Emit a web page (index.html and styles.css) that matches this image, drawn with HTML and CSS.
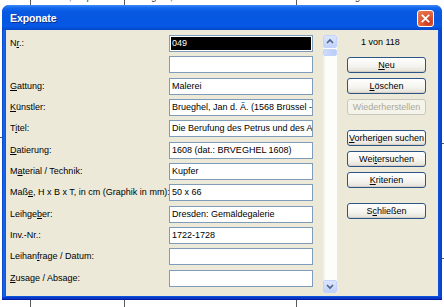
FILE: index.html
```html
<!DOCTYPE html>
<html lang="de">
<head>
<meta charset="utf-8">
<title>Exponate</title>
<link rel="stylesheet" href="styles.css">
</head>
<body>
<div class="desk">
  <div class="bg-vline" style="left:30px"></div>
  <div class="bg-vline" style="left:124px"></div>
  <div class="bg-vline" style="left:296px"></div>
  <div class="bg-hline" style="left:0;top:137px;width:3px"></div>
  <div class="bg-hline" style="left:441px;top:143px;width:3px"></div>
  <div class="bg-hline" style="left:441px;top:258px;width:3px"></div>
  <div class="bg-text" style="left:36px">Malerei, Kupfer</div>
  <div class="bg-text" style="left:130px">Brueghel, Jan d. Ä. 1568 Brüssel</div>
  <div class="bg-text" style="left:302px">Die Berufung des Petrus</div>

  <div class="win">
    <div class="titlebar">
      <span class="title">Exponate</span>
      <span class="close">
        <svg width="17" height="17" viewBox="0 0 17 17"><path d="M5 5 L12 12 M12 5 L5 12" stroke="#fff" stroke-width="2" stroke-linecap="square"/></svg>
      </span>
    </div>
    <div class="content">
      <div class="form">
        <div class="lbl">N<u>r</u>.:</div><div class="field sel"><span>049</span></div>
        <div class="lbl"></div><div class="field"></div>
        <div class="lbl"><u>G</u>attung:</div><div class="field">Malerei</div>
        <div class="lbl"><u>K</u>ünstler:</div><div class="field">Brueghel, Jan d. Ä. (1568 Brüssel - 1625 Antwerpen)</div>
        <div class="lbl">T<u>i</u>tel:</div><div class="field">Die Berufung des Petrus und des Andreas</div>
        <div class="lbl"><u>D</u>atierung:</div><div class="field">1608 (dat.: BRVEGHEL 1608)</div>
        <div class="lbl">M<u>a</u>terial / Technik:</div><div class="field">Kupfer</div>
        <div class="lbl">Maß<u>e</u>, H x B x T, in cm (Graphik in mm):</div><div class="field">50 x 66</div>
        <div class="lbl">Leihge<u>b</u>er:</div><div class="field">Dresden: Gemäldegalerie</div>
        <div class="lbl">Inv.-Nr.:</div><div class="field">1722-1728</div>
        <div class="lbl">Leihan<u>f</u>rage / Datum:</div><div class="field"></div>
        <div class="lbl"><u>Z</u>usage / Absage:</div><div class="field"></div>
      </div>
      <div class="scroll">
        <div class="sb-btn"><svg width="14" height="13" viewBox="0 0 14 13"><path d="M4 8 L7 5 L10 8" fill="none" stroke="#4D6185" stroke-width="1.6"/></svg></div>
        <div class="sb-thumb"></div>
        <div class="sb-track"></div>
        <div class="sb-btn"><svg width="14" height="13" viewBox="0 0 14 13"><path d="M4 5 L7 8 L10 5" fill="none" stroke="#4D6185" stroke-width="1.6"/></svg></div>
      </div>
      <div class="side">
        <div class="count">1 von 118</div>
        <div class="btn"><u>N</u>eu</div>
        <div class="btn"><u>L</u>öschen</div>
        <div class="btn disabled">Wiederherstellen</div>
        <div class="btn group"><u>V</u>orherigen suchen</div>
        <div class="btn">Wei<u>t</u>ersuchen</div>
        <div class="btn"><u>K</u>riterien</div>
        <div class="btn group">S<u>c</u>hließen</div>
      </div>
    </div>
  </div>
</div>
</body>
</html>
```

FILE: styles.css
```css
* { box-sizing: border-box; }
html, body { margin: 0; padding: 0; }
body {
  width: 444px;
  height: 307px;
  overflow: hidden;
  background: #fff;
  font-family: "Liberation Sans", Arial, sans-serif;
  font-size: 9px;
  color: #000;
}
.desk {
  position: relative;
  width: 444px;
  height: 307px;
  overflow: hidden;
  background: #fff;
}
.bg-vline {
  position: absolute;
  top: 0;
  width: 1px;
  height: 307px;
  background: #5a5a5a;
}
.bg-hline {
  position: absolute;
  height: 1px;
  background: #5a5a5a;
}
.bg-text {
  position: absolute;
  top: -9px;
  font-size: 10px;
  line-height: 12px;
  color: #444;
  white-space: nowrap;
}

/* window */
.win {
  position: absolute;
  left: 2px;
  top: 5px;
  width: 440px;
  height: 295px;
  display: flex;
  flex-direction: column;
  border-radius: 7px 7px 0 0;
  background: linear-gradient(90deg, #0840C8 0, #1A6AEE 2px, #0A52DC 4px, #0A52DC calc(100% - 4px), #0A3FC4 100%);
  padding: 0 4px 4px 4px;
  box-shadow: inset 0 -1px 0 #0019A0, inset 0 -3px 0 #0738C8;
}
.titlebar {
  height: 25px;
  margin: 0 -4px;
  padding: 0 8px 0 8px;
  display: flex;
  align-items: center;
  justify-content: space-between;
  border-radius: 7px 7px 0 0;
  background: linear-gradient(180deg, #3D8AF7 0, #1167EB 3px, #0858E2 7px, #0556E0 14px, #0659E6 21px, #0448C8 25px);
}
.title {
  color: #fff;
  font-weight: bold;
  font-size: 10.5px;
  letter-spacing: -0.1px;
  text-shadow: 1px 1px 0 #0A2E8C;
  margin-top: 1px;
}
.close {
  width: 17px;
  height: 17px;
  margin-top: 1px;
  border: 1px solid #fff;
  border-radius: 3px;
  background: radial-gradient(circle at 70% 75%, #C4381A 0, #DE5A35 45%, #E8825E 100%);
  display: flex;
  align-items: center;
  justify-content: center;
  overflow: hidden;
}
.close svg { display: block; }

.content {
  flex: 1;
  background: #ECE9D8;
  display: flex;
  align-items: flex-start;
  padding: 5px 0 0 4px;
}

/* form */
.form {
  display: grid;
  grid-template-columns: 159px 144px;
  grid-auto-rows: 17px;
  row-gap: 4.33px;
}
.lbl {
  line-height: 17px;
  white-space: nowrap;
  color: #000;
}
.lbl u { text-decoration-thickness: 1px; text-underline-offset: 1px; }
.field {
  height: 17px;
  border: 1px solid #7F9DB9;
  background: #fff;
  padding: 0 2px;
  line-height: 15px;
  white-space: nowrap;
  overflow: hidden;
}
.field.sel {
  padding: 1px 1px;
}
.field.sel span {
  display: block;
  height: 13px;
  line-height: 13px;
  background: #000;
  color: #fff;
  padding-left: 1px;
}

/* scrollbar */
.scroll {
  width: 14px;
  height: 258px;
  margin-left: 10px;
  display: flex;
  flex-direction: column;
  background: linear-gradient(90deg, #EEEDE5 0, #FDFDFA 3px, #FEFEFC 100%);
}
.sb-btn {
  width: 14px;
  height: 13px;
  border: 1px solid #C3D3FD;
  border-radius: 2px;
  background: linear-gradient(180deg, #DCE6FE, #C1D3FB);
}
.sb-btn svg { display: block; margin: -1px; }
.sb-thumb {
  height: 7px;
  margin-top: 1px;
  border: 1px solid #C3D3FD;
  border-radius: 2px;
  background: linear-gradient(90deg, #CDDBFD, #BACDF8);
}
.sb-track { flex: 1; }

/* side */
.side {
  display: flex;
  flex-direction: column;
  padding-left: 10px;
}
.count {
  margin-top: 1px;
  margin-left: 14px;
  line-height: 12px;
  height: 12px;
}
.btn {
  width: 79px;
  height: 16px;
  margin-top: 5.35px;
  border: 1px solid #2D5486;
  border-radius: 3px;
  background: linear-gradient(180deg, #FFFFFF 0, #F4F3EE 60%, #E3E0D5 100%);
  box-shadow: inset 0 -1px 0 #D6D0C5;
  text-align: center;
  line-height: 14px;
  white-space: nowrap;
  overflow: hidden;
  color: #000;
}
.count + .btn { margin-top: 8.7px; }
.btn.group { margin-top: 14.3px; }
.btn.disabled {
  border-color: #C9C7BA;
  background: #F5F4EA;
  box-shadow: none;
  color: #ACA899;
}
```
